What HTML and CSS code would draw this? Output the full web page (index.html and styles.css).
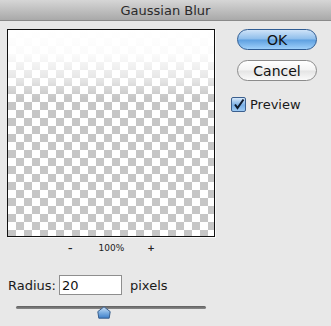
FILE: index.html
```html
<!DOCTYPE html>
<html>
<head>
    <title>Gaussian Blur</title>
    <link rel="stylesheet" href="styles.css">
</head>
<body>
    <div class="titlebar">Gaussian Blur</div>

    <div class="dialog">
        <div class="left">
            <div class="preview"></div>

            <div class="zoom">
                <span class="minus">&ndash;</span>
                <span class="pct">100%</span>
                <span class="plus">+</span>
            </div>

            <div class="radius-row">
                <label for="radius">Radius:</label>
                <input type="text" id="radius" value="20">
                <span class="unit">pixels</span>
            </div>

            <div class="slider">
                <div class="track"></div>
                <svg class="thumb" width="14" height="13" viewBox="0 0 14 13">
                    <defs>
                        <linearGradient id="tg" x1="0" y1="0" x2="0" y2="1">
                            <stop offset="0" stop-color="#cfe3f7"/>
                            <stop offset="0.5" stop-color="#7fb0e2"/>
                            <stop offset="1" stop-color="#3d7fc9"/>
                        </linearGradient>
                    </defs>
                    <path d="M7 0.8 L13.2 5.6 L12.2 12.2 L1.8 12.2 L0.8 5.6 Z" fill="url(#tg)" stroke="#3a5f8c" stroke-width="1"/>
                </svg>
            </div>
        </div>

        <div class="right">
            <button type="button" class="btn ok">OK</button>
            <button type="button" class="btn cancel">Cancel</button>
            <div class="check-row">
                <span class="checkbox">
                    <svg width="13" height="13" viewBox="0 0 13 13">
                        <path d="M3 6.5 L5.5 10 L11.5 1.5" fill="none" stroke="#0e1a2c" stroke-width="2"/>
                    </svg>
                </span>
                <span class="check-label">Preview</span>
            </div>
        </div>
    </div>
</body>
</html>
```
FILE: styles.css
```css
body {
    font-family: "DejaVu Sans", sans-serif;
    background-color: #e8e8e8;
    margin: 0;
    padding: 0;
    color: #1a1a1a;
}

.titlebar {
    height: 20px;
    line-height: 21px;
    text-align: center;
    font-size: 13px;
    color: #2a2a2a;
    background: linear-gradient(#d6d6d6, #a9a9a9);
    border-bottom: 1px solid #8a8a8a;
}

.dialog {
    display: flex;
    padding: 8px 0 0 7px;
}

.left {
    width: 208px;
}

.preview {
    width: 206px;
    height: 206px;
    border: 1px solid #111;
    background:
        linear-gradient(rgba(255, 255, 255, 1) 0px, rgba(255, 255, 255, 0.92) 25px, rgba(255, 255, 255, 0.55) 50px, rgba(255, 255, 255, 0) 68px),
        repeating-conic-gradient(#c6c6c6 0 25%, #ffffff 0 50%) 0 0 / 16px 16px;
    box-shadow: 1px 1px 0 #f8f8f8;
}

.zoom {
    display: flex;
    font-size: 9px;
    height: 16px;
    align-items: center;
    margin-top: 3px;
    color: #222;
}

.minus {
    margin-left: 61px;
    font-weight: bold;
}

.pct {
    margin-left: 26px;
}

.plus {
    margin-left: 23px;
    font-weight: bold;
}

.radius-row {
    display: flex;
    align-items: center;
    margin-top: 19px;
    font-size: 13px;
}

.radius-row label {
    margin-left: 1px;
}

.radius-row input {
    width: 57px;
    height: 16px;
    margin-left: 3px;
    padding: 1px 2px;
    border: 1px solid #8e8e8e;
    font-family: "DejaVu Sans", sans-serif;
    font-size: 13px;
    color: #111;
    background: #fff;
}

.unit {
    margin-left: 8px;
}

.slider {
    position: relative;
    height: 14px;
    margin-top: 11px;
}

.track {
    margin-left: 9px;
    width: 190px;
    height: 3px;
    margin-top: 4px;
    border-radius: 2px;
    background: linear-gradient(#5e5e5e, #8a8a8a);
}

.thumb {
    position: absolute;
    left: 90px;
    top: 0px;
}

.right {
    display: flex;
    flex-direction: column;
    margin-left: 22px;
}

.btn {
    width: 80px;
    height: 21px;
    border-radius: 11px;
    font-family: "DejaVu Sans", sans-serif;
    font-size: 14px;
    color: #111;
    padding: 0;
    cursor: pointer;
}

.ok {
    border: 1px solid #2f5c93;
    background: linear-gradient(#cfe3f8 0%, #8dbdeb 48%, #5d9fe0 52%, #9fd0fa 100%);
}

.cancel {
    margin-top: 10px;
    border: 1px solid #8b8b8b;
    background: linear-gradient(#ffffff 0%, #f3f3f3 48%, #e4e4e4 52%, #fafafa 100%);
}

.check-row {
    display: flex;
    align-items: center;
    margin-top: 16px;
    margin-left: -6px;
}

.checkbox {
    width: 13px;
    height: 13px;
    border: 1px solid #3b5f8e;
    border-radius: 2px;
    background: linear-gradient(#d6e8fa, #79aee4 55%, #9ccaf4);
    display: flex;
}

.check-label {
    margin-left: 4px;
    font-size: 13px;
}
```
